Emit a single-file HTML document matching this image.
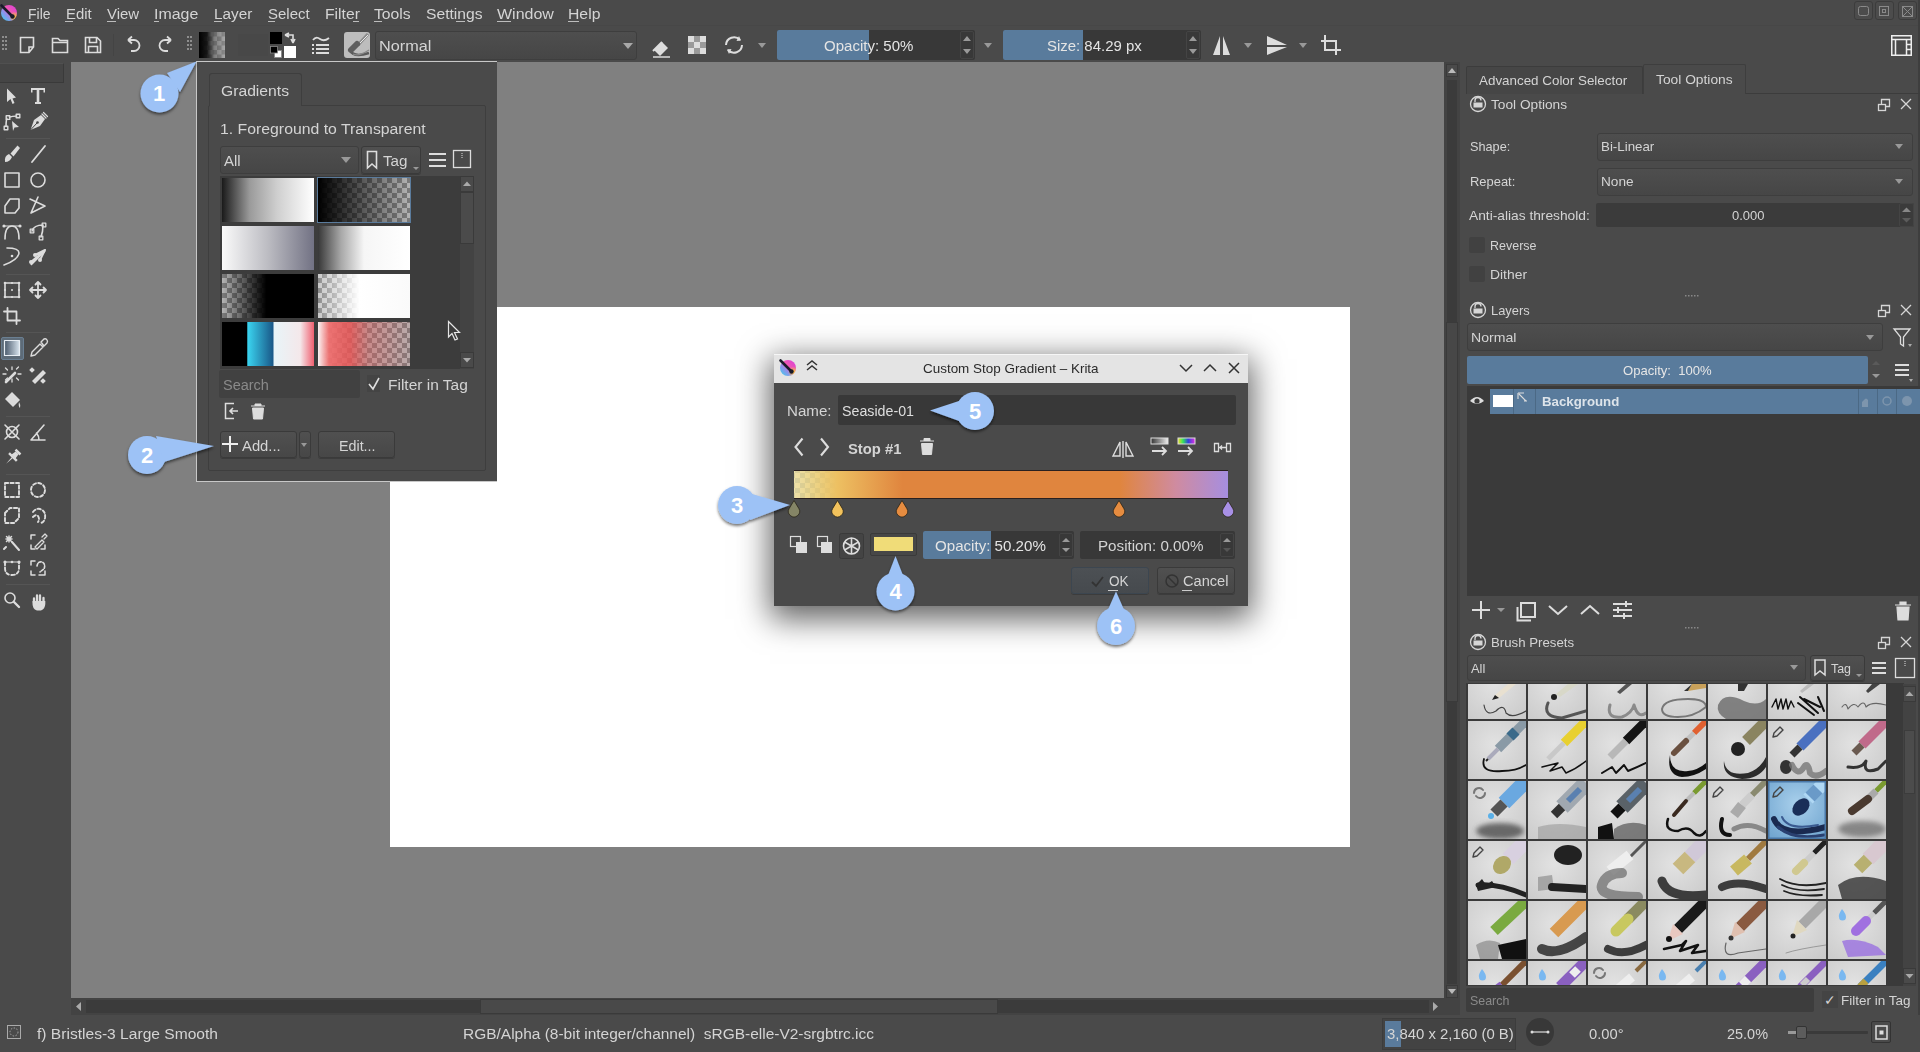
<!DOCTYPE html>
<html><head><meta charset="utf-8">
<style>
*{margin:0;padding:0;box-sizing:border-box}
html,body{width:1920px;height:1052px;overflow:hidden;background:#4a4a4a;font-family:"Liberation Sans",sans-serif;color:#d4d4d4;font-size:13px}
.a{position:absolute}
.t{position:absolute;white-space:nowrap;line-height:1}
svg{position:absolute;overflow:visible}
.m{font-size:14px;top:7px}
.btn{position:absolute;border:1px solid #3a3a3a;border-radius:3px;background:linear-gradient(#505050,#474747);box-shadow:0 1px 0 #3c3c3c}
.fld{position:absolute;background:#3a3a3a;border-radius:2px}
.combo{position:absolute;border:1px solid #3e3e3e;border-radius:3px;background:linear-gradient(#4e4e4e,#464646)}
.arr{position:absolute;width:0;height:0;border-left:5px solid transparent;border-right:5px solid transparent;border-top:6px solid #a8a8a8}
.ic{stroke:#dcdcdc;fill:none;stroke-width:1.6}
</style></head><body>

<!-- ============ MENU ============ -->
<svg style="left:0px;top:4px" width="18" height="18" viewBox="0 0 18 18"><defs><linearGradient id="kaa" x1="1" y1="0" x2="0" y2="1"><stop offset="0" stop-color="#d83ae0"/><stop offset=".45" stop-color="#f05ab0"/><stop offset=".6" stop-color="#9a8ae8"/><stop offset="1" stop-color="#30d8f0"/></linearGradient>
<radialGradient id="kab" cx=".85" cy=".75" r=".35"><stop offset="0" stop-color="#f8d030"/><stop offset="1" stop-color="#f8d030" stop-opacity="0"/></radialGradient></defs>
<circle cx="9" cy="9" r="8" fill="url(#kaa)"/><circle cx="9" cy="9" r="8" fill="url(#kab)"/>
<path d="M1.5 1.5 L11.5 11.5" stroke="#1a1a2a" stroke-width="2.6" stroke-linecap="round"/><circle cx="12.5" cy="12.5" r="2.2" fill="#1a1a2a"/></svg>
<div class="t m" style="left:27.5px;top:6.9px;transform:scaleX(0.997);transform-origin:0 0">File</div>
<div class="t m" style="left:66.2px;top:6.9px;transform:scaleX(1.063);transform-origin:0 0">Edit</div>
<div class="t m" style="left:107.2px;top:6.9px;transform:scaleX(1.068);transform-origin:0 0">View</div>
<div class="t m" style="left:154.4px;top:6.9px;transform:scaleX(1.139);transform-origin:0 0">Image</div>
<div class="t m" style="left:214.0px;top:6.9px;transform:scaleX(1.093);transform-origin:0 0">Layer</div>
<div class="t m" style="left:267.7px;top:6.9px;transform:scaleX(1.069);transform-origin:0 0">Select</div>
<div class="t m" style="left:324.5px;top:6.9px;transform:scaleX(1.121);transform-origin:0 0">Filter</div>
<div class="t m" style="left:374.0px;top:6.9px;transform:scaleX(1.123);transform-origin:0 0">Tools</div>
<div class="t m" style="left:425.5px;top:6.9px;transform:scaleX(1.117);transform-origin:0 0">Settings</div>
<div class="t m" style="left:497.0px;top:6.9px;transform:scaleX(1.143);transform-origin:0 0">Window</div>
<div class="t m" style="left:568.0px;top:6.9px;transform:scaleX(1.125);transform-origin:0 0">Help</div>
<div class="a" style="left:27.0px;top:21px;width:7.0px;height:1px;background:#bdbdbd"></div><div class="a" style="left:65.0px;top:21px;width:8.0px;height:1px;background:#bdbdbd"></div><div class="a" style="left:107.0px;top:21px;width:8.6px;height:1px;background:#bdbdbd"></div><div class="a" style="left:154.0px;top:21px;width:5.4px;height:1px;background:#bdbdbd"></div><div class="a" style="left:214.0px;top:21px;width:8.0px;height:1px;background:#bdbdbd"></div><div class="a" style="left:267.7px;top:21px;width:6.9px;height:1px;background:#bdbdbd"></div><div class="a" style="left:353.0px;top:21px;width:6.4px;height:1px;background:#bdbdbd"></div><div class="a" style="left:373.7px;top:21px;width:8.5px;height:1px;background:#bdbdbd"></div><div class="a" style="left:455.8px;top:21px;width:9.2px;height:1px;background:#bdbdbd"></div><div class="a" style="left:497.0px;top:21px;width:14.3px;height:1px;background:#bdbdbd"></div><div class="a" style="left:568.3px;top:21px;width:10.3px;height:1px;background:#bdbdbd"></div>
<!-- window buttons -->
<div class="a" style="left:1854px;top:1px;width:19px;height:19px;border:1px solid #3c3c3c;border-radius:3px;background:#4c4c4c"></div>
<div class="a" style="left:1875px;top:1px;width:19px;height:19px;border:1px solid #3c3c3c;border-radius:3px;background:#4c4c4c"></div>
<div class="a" style="left:1898px;top:1px;width:19px;height:19px;border:1px solid #3c3c3c;border-radius:3px;background:#4c4c4c"></div>
<svg style="left:1854px;top:1px" width="64" height="19">
<g stroke="#8a8a8a" fill="none" stroke-width="1"><rect x="4.5" y="5.5" width="10" height="9" rx="2"/><rect x="25.5" y="5.5" width="9" height="9"/><rect x="28.5" y="8.5" width="3" height="3"/><rect x="48.5" y="5.5" width="10" height="10"/><path d="M48.5 5.5 L58.5 15.5 M58.5 5.5 L48.5 15.5"/></g>
</svg>
<div class="a" style="left:0;top:25px;width:1920px;height:1px;background:#474747"></div>

<!-- ============ TOOLBAR ============ -->
<svg style="left:0;top:28px" width="1920" height="34">
<g fill="#8e8e8e"><rect x="2" y="8" width="2" height="2"/><rect x="5" y="8" width="2" height="2"/><rect x="2" y="12" width="2" height="2"/><rect x="5" y="12" width="2" height="2"/><rect x="2" y="16" width="2" height="2"/><rect x="5" y="16" width="2" height="2"/><rect x="2" y="20" width="2" height="2"/><rect x="5" y="20" width="2" height="2"/></g>
<g fill="#8e8e8e"><rect x="187" y="8" width="2" height="2"/><rect x="190" y="8" width="2" height="2"/><rect x="187" y="12" width="2" height="2"/><rect x="190" y="12" width="2" height="2"/><rect x="187" y="16" width="2" height="2"/><rect x="190" y="16" width="2" height="2"/><rect x="187" y="20" width="2" height="2"/><rect x="190" y="20" width="2" height="2"/></g>
<g class="ic" stroke-width="1.5">
<path d="M20.5 9.5 H33.5 V19 L29 24.5 H20.5 Z M33.5 19 H29 V24.5"/>
<path d="M52.5 10.5 H58 L60 12.5 H67.5 V24.5 H52.5 Z M52.5 14.5 H67.5"/>
<path d="M85.5 9.5 H97 L100.5 13 V24.5 H85.5 Z M89.5 9.5 V14.5 H96.5 V9.5 M88.5 24.5 V18.5 H97.5 V24.5"/>
<path d="M128 12 L132 8.5 M128 12 L132 15.5 M128.5 12 H134 A5.5 5.5 0 0 1 134 23 H131" stroke-width="1.8"/>
<path d="M171 12 L167 8.5 M171 12 L167 15.5 M170.5 12 H165 A5.5 5.5 0 0 0 165 23 H168" stroke-width="1.8"/>
</g>
<rect x="113" y="6" width="1" height="22" fill="#444"/>
<defs><linearGradient id="g0" x1="0" x2="1"><stop offset="0" stop-color="#000"/><stop offset=".3" stop-color="#000" stop-opacity=".85"/><stop offset=".6" stop-color="#000" stop-opacity=".25"/><stop offset="1" stop-color="#000" stop-opacity="0"/></linearGradient>
<pattern id="chk" x="199" y="4" width="9" height="9" patternUnits="userSpaceOnUse"><rect width="9" height="9" fill="#8a8a8a"/><rect width="4.5" height="4.5" fill="#a8a8a8"/><rect x="4.5" y="4.5" width="4.5" height="4.5" fill="#a8a8a8"/></pattern></defs>
<rect x="199" y="4" width="26" height="26" fill="url(#chk)"/>
<rect x="199" y="4" width="26" height="26" fill="url(#g0)"/>
<rect x="238" y="6" width="30" height="22" fill="#484848"/>
<rect x="270" y="4" width="12" height="12" fill="#000"/>
<rect x="284" y="18" width="12" height="12" fill="#fff"/>
<rect x="274.5" y="22.5" width="7" height="7" fill="#fff" stroke="#888" stroke-width=".8"/><rect x="270.5" y="18.5" width="7" height="6.5" fill="#000" stroke="#888" stroke-width=".8"/>
<path d="M285 7 L289 5 M285 7 L289 9 M285 7 H293 V14 M293 15 L291 11 M293 15 L295 11" stroke="#ddd" stroke-width="1.6" fill="none"/>
<g stroke="#ddd" stroke-width="1.8" fill="none"><path d="M313 12 Q316 8 320 11 T329 10"/><path d="M316 17 H329 M316 21 H329 M316 25 H329"/></g>
<g fill="#ddd"><rect x="312" y="16" width="2" height="2"/><rect x="312" y="20" width="2" height="2"/><rect x="312" y="24" width="2" height="2"/></g>
<rect x="344" y="4" width="26" height="26" rx="3" fill="#bdbdbd"/>
<path d="M350 22 Q353 30 369 25" stroke="#5a5a5a" stroke-width="2.6" fill="none"/><path d="M353 26 Q358 29 369 22" stroke="#888" stroke-width="1.2" fill="none"/>
<path d="M358 17 L368 6" stroke="#8a8a8a" stroke-width="3.2"/><path d="M359 16 L368 7" stroke="#e8e8e8" stroke-width="1"/><path d="M351 22 L357 16" stroke="#5e5e5e" stroke-width="6" stroke-linecap="round"/>
</svg>
<!-- Normal combo -->
<div class="combo" style="left:375px;top:31px;width:262px;height:29px"></div>
<div class="t" style="left:379.3px;top:39.1px;font-size:14px;transform:scaleX(1.161);transform-origin:0 0">Normal</div>
<div class="arr" style="left:623px;top:43px"></div>
<svg style="left:640px;top:28px" width="740" height="34">
<path d="M14 22 L22 14 L28 20 L20 28 Z" fill="#ddd"/><path d="M13 23 L22 14" stroke="#ddd" stroke-width="2"/><path d="M13 29 H30" stroke="#ddd" stroke-width="1.5"/>
<g fill="#ddd"><rect x="48" y="8" width="6" height="6"/><rect x="60" y="8" width="6" height="6"/><rect x="54" y="14" width="6" height="6"/><rect x="48" y="20" width="6" height="6"/><rect x="60" y="20" width="6" height="6"/></g>
<g fill="#9a9a9a"><rect x="54" y="8" width="6" height="6"/><rect x="48" y="14" width="6" height="6"/><rect x="60" y="14" width="6" height="6"/><rect x="54" y="20" width="6" height="6"/></g>
<path d="M86 17 A8 8 0 0 1 100 12 M102 17 A8 8 0 0 1 88 22" stroke="#ddd" stroke-width="2" fill="none"/>
<path d="M99 8 L101 12.5 L96.5 13 Z M89 26 L87 21.5 L91.5 21 Z" fill="#ddd"/>
</svg>
<div class="arr" style="left:758px;top:43px;border-top-color:#999;border-left-width:4px;border-right-width:4px;border-top-width:5px"></div>
<!-- opacity slider -->
<div class="a" style="left:777px;top:30px;width:198px;height:30px;background:#383838;border-radius:2px"></div>
<div class="a" style="left:777px;top:30px;width:92px;height:30px;background:#597b9c;border-radius:2px 0 0 2px"></div>
<div class="t" style="left:823.8px;top:39.1px;font-size:14px;color:#e4e4e4;transform:scaleX(1.073);transform-origin:0 0">Opacity: 50%</div>
<div class="a" style="left:960px;top:31px;width:14px;height:28px;border:1px solid #444;border-radius:2px"></div>
<svg style="left:960px;top:31px" width="14" height="28"><path d="M3 10 L7 5 L11 10 Z M3 18 L7 23 L11 18 Z" fill="#999"/></svg>
<div class="arr" style="left:984px;top:43px;border-top-color:#999;border-left-width:4px;border-right-width:4px;border-top-width:5px"></div>
<!-- size slider -->
<div class="a" style="left:1003px;top:30px;width:198px;height:30px;background:#383838;border-radius:2px"></div>
<div class="a" style="left:1003px;top:30px;width:80px;height:30px;background:#597b9c;border-radius:2px 0 0 2px"></div>
<div class="t" style="left:1047.0px;top:39.1px;font-size:14px;color:#e4e4e4;transform:scaleX(1.067);transform-origin:0 0">Size: 84.29 px</div>
<div class="a" style="left:1186px;top:31px;width:14px;height:28px;border:1px solid #444;border-radius:2px"></div>
<svg style="left:1186px;top:31px" width="14" height="28"><path d="M3 10 L7 5 L11 10 Z M3 18 L7 23 L11 18 Z" fill="#999"/></svg>
<svg style="left:1200px;top:28px" width="160" height="34">
<path d="M13 27 L20 8 V27 Z M23 8 L30 27 H23 Z" fill="#ddd"/>
<path d="M44 15 L52 15 L48 20 Z" fill="#999"/>
<path d="M67 8 L87 17 L67 17 Z M67 19 L87 19 L67 27 Z" fill="#ddd"/>
<path d="M99 15 L107 15 L103 20 Z" fill="#999"/>
<path d="M125 7 V22 H141 M121 13 H136 V27" stroke="#ddd" stroke-width="2" fill="none"/>
</svg>
<svg style="left:1891px;top:35px" width="21" height="21"><g stroke="#eee" stroke-width="1.5" fill="none"><rect x="0.75" y="0.75" width="19.5" height="19.5"/><path d="M1 4.5 H20 M4.5 4.5 V20 M15.5 4.5 V20 M15.5 9.5 H20 M15.5 14.5 H20"/></g></svg>

<!-- ============ CANVAS ============ -->
<div class="a" style="left:71px;top:62px;width:1373px;height:936px;background:#808080"></div>
<div class="a" style="left:390px;top:307px;width:960px;height:540px;background:#fff"></div>
<!-- v scrollbar -->
<div class="a" style="left:1444px;top:62px;width:16px;height:953px;background:#434343"></div>
<div class="a" style="left:1446px;top:64px;width:12px;height:13px;border:1px solid #3a3a3a;background:#4a4a4a"></div>
<svg style="left:1446px;top:64px" width="12" height="13"><path d="M2 9 L6 4 L10 9 Z" fill="#bbb"/></svg>
<div class="a" style="left:1447px;top:80px;width:10px;height:904px;background:#3b3b3b"></div>
<div class="a" style="left:1446px;top:322px;width:12px;height:380px;background:#474747;border:1px solid #3a3a3a"></div>
<div class="a" style="left:1446px;top:985px;width:12px;height:13px;border:1px solid #3a3a3a;background:#4a4a4a"></div>
<svg style="left:1446px;top:985px" width="12" height="13"><path d="M2 4 L6 9 L10 4 Z" fill="#bbb"/></svg>
<!-- h scrollbar -->
<div class="a" style="left:71px;top:998px;width:1373px;height:17px;background:#434343"></div>
<div class="a" style="left:86px;top:1000px;width:1343px;height:13px;background:#3b3b3b"></div>
<div class="a" style="left:480px;top:999px;width:518px;height:15px;background:#494949;border:1px solid #3a3a3a"></div>
<svg style="left:72px;top:999px" width="1372" height="15"><path d="M9 3 L4 7.5 L9 12 Z M1361 3 L1366 7.5 L1361 12 Z" fill="#aaa"/></svg>


<!-- ============ LEFT TOOLBOX ============ -->
<div class="a" style="left:0;top:63px;width:64px;height:20px;background:#454545;border:1px solid #3a3a3a;border-left:0;border-top-color:#505050"></div>
<div class="a" style="left:66px;top:62px;width:5px;height:936px;background:#4a4a4a"></div>
<div class="a" style="left:1px;top:337px;width:23px;height:23px;background:#5d6b78;border:1px solid #6a7f92;border-radius:2px"></div>
<svg style="left:0;top:0" width="66" height="640">
<defs><linearGradient id="gt" x1="0" y1="0" x2="1" y2="0"><stop offset="0" stop-color="#4a5a6c"/><stop offset="1" stop-color="#d8e4ee"/></linearGradient></defs>
<g stroke="#555" stroke-width="1"><path d="M6 138.5 H50 M6 274.5 H50 M6 332.5 H50 M6 416.5 H50 M6 474.5 H50 M6 584.5 H50"/></g>
<g fill="#dcdcdc">
<path d="M7 88.5 L7 102 L10.5 99 L12.5 104 L14.5 103 L12.5 98.5 L16 97.5 Z"/>
<path d="M31 88 H45 V92.5 H43.5 V90 H39.3 V102 H41 V104 H35 V102 H36.7 V90 H32.5 V92.5 H31 Z"/>
<path d="M12 121 L19 127 L14.5 127.5 L13 131 Z"/>
<path d="M30.5 130 L34 120 L41 115 L45 119 L40 126 Z"/>
<path d="M5 162 Q4 156 9 154 L12 157 Q10 162 5 162 Z"/><path d="M10.5 153.5 L13.5 156.5 L20 148 L17.5 145.5 Z"/>
<path d="M31 213.5 L31 213.5"/>
<path d="M30 264 L44 250 L45.5 251.5 L31.5 265.5 Z" />
<path d="M6 606 L6 606"/>
<path d="M5 318 L5 318"/>
<path d="M32 381 L43 370 L46 373 L35 384 Z"/><rect x="30" y="368" width="4" height="4" transform="rotate(45 32 370)"/><rect x="41" y="379" width="4" height="4" transform="rotate(45 43 381)"/>
<path d="M5 399 L12 392 L20 400 L13 407 Z"/><path d="M19 402 Q21 405 20 408 Q18 406 19 402 Z"/>
<g transform="translate(12.5 457.5) rotate(45)"><rect x="-3.5" y="-9" width="7" height="2.5"/><path d="M-2 -6.5 H2 L2.8 -1.5 H-2.8 Z"/><rect x="-5.5" y="-1.8" width="11" height="2.4"/><path d="M-0.7 0.5 H0.7 L0 9 Z"/></g>
<path d="M32.5 602 Q32 609 37 610.5 H41 Q45 609 45.3 604 V601 H32.5 Z"/>
</g>
<g fill="none" stroke="#dcdcdc" stroke-width="1.6" stroke-linejoin="round" stroke-linecap="round">
<path d="M6 127 Q6 118 8 117.5 Q12 116 18 116"/>
<rect x="4.2" y="126.2" width="3.6" height="3.6" stroke-width="1.4"/><rect x="6.2" y="115.8" width="3.6" height="3.6" stroke-width="1.4"/><rect x="16.2" y="114.2" width="3.6" height="3.6" stroke-width="1.4"/>
<path d="M42 114 L46 118 M43.5 112.5 L47.5 116.5" stroke-width="1.2"/>
<path d="M32 162 L45 146" stroke-width="1.8"/>
<rect x="5" y="173" width="14" height="14"/><circle cx="38" cy="180" r="7"/>
<path d="M5 206 L10 199 H19 V208 L15 213 H5 Z"/>
<path d="M31 213 L45 206 L30 199 M31 213 L38 197"/>
<path d="M5 239 Q5 226 12 226 Q19 226 19 239"/><path d="M4 226 H20" stroke-width="1.2"/>
<path d="M32 231 Q34 225 43 225 Q43 232 41 237"/>
<rect x="30.2" y="229.2" width="3.6" height="3.6" stroke-width="1.3"/><rect x="42.2" y="223.2" width="3.6" height="3.6" stroke-width="1.3"/><rect x="39.2" y="236.2" width="3.6" height="3.6" stroke-width="1.3"/>
<path d="M4 265 Q18 260 19 253 Q19 248 7 248"/>
<path d="M45 250 L35 255 M45 250 L40 260 M45 250 L31 262" stroke-width="2"/>
<rect x="5" y="283" width="14" height="14"/>
<path d="M38 282 V298 M30 290 H46 M35.5 284.5 L38 282 L40.5 284.5 M35.5 295.5 L38 298 L40.5 295.5 M32.5 287.5 L30 290 L32.5 292.5 M43.5 287.5 L46 290 L43.5 292.5" stroke-width="1.8"/>
<path d="M7.5 308 V320.5 H20 M4 311.5 H16.5 V324" stroke-width="1.8"/>
<rect x="4.5" y="340.5" width="15" height="15" fill="url(#gt)" stroke="#e8eef4" stroke-width="1.2"/>
<path d="M31 356 L32 352 L40 344 L43 347 L35 355 Z M41 342 L44 339 Q46 338 47 340 Q48 341 47 343 L44 346 Z" stroke-width="1.4"/>
<path d="M6 382 L15 373" stroke-width="2.6"/><path d="M3 374 H6 M18 374 H21 M12 367 V369.5 M12 379 V382 M5.5 368 L7.5 370 M16.5 378 L18.5 380 M5.5 380 L7.5 378 M18.5 367 L16.5 369" stroke-width="1.3"/>
<path d="M5 425 L19 439 M19 425 L5 439"/><circle cx="12" cy="432" r="5.5"/>
<path d="M31 440 L44 425 M31 440 H45 M36.5 433 Q39 436 39 440"/>
<rect x="5" y="483" width="14" height="14" stroke-dasharray="3.2 2.3" stroke-width="1.9"/><circle cx="38" cy="490" r="7" stroke-dasharray="3.2 2.3" stroke-width="1.9"/>
<path d="M5 513 L10 508 H19 V518 L14 523 H5 Z" stroke-dasharray="3.2 2.3" stroke-width="1.9"/>
<path d="M33 512 Q36 508 40 509 Q46 511 45 518 Q44 523 40 523 M33 517 Q36 514 38 516 Q40 519 38 522" stroke-dasharray="3.2 2.3" stroke-width="1.9"/>
<path d="M6 547 L4 549" stroke-width="2"/><path d="M9 536 V542 M6 539 H12 M6.5 536.5 L11.5 541.5 M11.5 536.5 L6.5 541.5" stroke-width="1.5"/><path d="M12 542 L19 550" stroke-width="2"/>
<path d="M31 535 H35 M31 535 V539 M31 545 V549 H35 M41 549 H45 V545" stroke-width="1.5"/><path d="M35 547 L42 540 L44 542 L37 549 Z M42 537 L45 534 L47 536 L44 539" stroke-width="1.3"/>
<path d="M5 562 V568 Q5 575 12 575 Q19 575 19 568 V562" stroke-dasharray="3.2 2.3" stroke-width="1.9"/><path d="M5 562 H19" stroke-width="1.2"/>
<path d="M31 561 H35 M31 561 V565 M31 571 V575 H35 M39 575 H45 V571" stroke-width="1.5"/><path d="M37 566 Q38 561 42 562 Q46 564 44 569 L40 572" stroke-dasharray="2.5 1.5"/>
<circle cx="10" cy="598" r="5"/><path d="M14 602 L19 607" stroke-width="2.4"/><path d="M34 603 V598.5 M37 602 V595.5 M40 602 V595.5 M43.5 603 V598" stroke-width="2.3"/>
</g>
<g fill="#dcdcdc"><circle cx="5" cy="562" r="1.6"/><circle cx="19" cy="562" r="1.6"/><circle cx="12" cy="562" r="1.3"/><circle cx="12" cy="290" r="1"/>
<circle cx="5" cy="283" r="1.3"/><circle cx="19" cy="283" r="1.3"/><circle cx="5" cy="297" r="1.3"/><circle cx="19" cy="297" r="1.3"/><circle cx="12" cy="283" r="1.1"/><circle cx="12" cy="297" r="1.1"/><circle cx="5" cy="290" r="1.1"/><circle cx="19" cy="290" r="1.1"/>
<circle cx="12" cy="256" r="1.3"/><circle cx="35" cy="255" r="2"/><circle cx="40" cy="260" r="2"/><circle cx="31" cy="262" r="2"/>
<circle cx="4" cy="226" r="1.6"/><circle cx="20" cy="226" r="1.6"/>
</g>
<g fill="#444"><rect x="5.2" y="127.2" width="1.6" height="1.6"/><rect x="7.2" y="116.8" width="1.6" height="1.6"/><rect x="17.2" y="115.2" width="1.6" height="1.6"/><circle cx="37.5" cy="122.5" r="1.3"/><path d="M30.5 130 L37 123" stroke="#444" stroke-width="1"/></g>
</svg>


<!-- ============ RIGHT DOCK ============ -->
<div class="a" style="left:1460px;top:62px;width:460px;height:953px;background:#4a4a4a"></div>
<div class="a" style="left:1918px;top:0;width:2px;height:1052px;background:#3e3e3e"></div>
<!-- tabs -->
<div class="a" style="left:1466px;top:93px;width:454px;height:1px;background:#3c3c3c"></div>
<div class="a" style="left:1466px;top:66px;width:177px;height:28px;border:1px solid #3c3c3c;border-bottom:0;border-radius:2px 2px 0 0;background:#464646"></div>
<div class="a" style="left:1643px;top:64px;width:103px;height:30px;border:1px solid #3e3e3e;border-bottom:0;border-radius:2px 2px 0 0;background:#4a4a4a"></div>
<div class="a" style="left:1644px;top:93px;width:101px;height:1px;background:#4a4a4a"></div>
<div class="t" style="left:1479.4px;top:74.0px;transform:scaleX(1.030);transform-origin:0 0">Advanced Color Selector</div>
<div class="t" style="left:1656.0px;top:73.2px;transform:scaleX(1.061);transform-origin:0 0">Tool Options</div>
<!-- dock header icons (lock / float / close) -->
<svg style="left:1460px;top:90px" width="460" height="560">
<g fill="none" stroke="#d6d6d6" stroke-width="1.3">
<circle cx="18" cy="14" r="7.5"/><path d="M15 12 V10.5 A3 3 0 0 1 21 10.5"/><rect x="13.5" y="12.5" width="9" height="5" fill="#d6d6d6" stroke="none"/>
<rect x="418.5" y="14.5" width="7" height="6"/><path d="M421.5 14.5 V9.5 H429.5 V16.5 H425.5"/>
<path d="M441 9 L451 19 M451 9 L441 19"/>
<circle cx="18" cy="220" r="7.5"/><path d="M15 218 V216.5 A3 3 0 0 1 21 216.5"/><rect x="13.5" y="218.5" width="9" height="5" fill="#d6d6d6" stroke="none"/>
<rect x="418.5" y="220.5" width="7" height="6"/><path d="M421.5 220.5 V215.5 H429.5 V222.5 H425.5"/>
<path d="M441 215 L451 225 M451 215 L441 225"/>
<circle cx="18" cy="552" r="7.5"/><path d="M15 550 V548.5 A3 3 0 0 1 21 548.5"/><rect x="13.5" y="550.5" width="9" height="5" fill="#d6d6d6" stroke="none"/>
<rect x="418.5" y="552.5" width="7" height="6"/><path d="M421.5 552.5 V547.5 H429.5 V554.5 H425.5"/>
<path d="M441 547 L451 557 M451 547 L441 557"/>
</g>
</svg>
<div class="t" style="left:1491.4px;top:98.0px;transform:scaleX(1.052);transform-origin:0 0">Tool Options</div>
<div class="t" style="left:1469.5px;top:140.2px;transform:scaleX(0.978);transform-origin:0 0">Shape:</div>
<div class="combo" style="left:1597px;top:133px;width:316px;height:28px"></div>
<div class="t" style="left:1601.0px;top:140.2px;transform:scaleX(1.024);transform-origin:0 0">Bi-Linear</div>
<div class="arr" style="left:1895px;top:144px;border-left-width:4px;border-right-width:4px;border-top-width:5px;border-top-color:#999"></div>
<div class="t" style="left:1469.5px;top:175.0px;transform:scaleX(0.995);transform-origin:0 0">Repeat:</div>
<div class="combo" style="left:1597px;top:168px;width:316px;height:28px"></div>
<div class="t" style="left:1601.0px;top:175.0px;transform:scaleX(1.049);transform-origin:0 0">None</div>
<div class="arr" style="left:1895px;top:179px;border-left-width:4px;border-right-width:4px;border-top-width:5px;border-top-color:#999"></div>
<div class="t" style="left:1469.0px;top:209.2px;transform:scaleX(1.058);transform-origin:0 0">Anti-alias threshold:</div>
<div class="fld" style="left:1596px;top:203px;width:318px;height:24px;background:#3b3b3b"></div>
<div class="a" style="left:1899px;top:203px;width:15px;height:24px;border:1px solid #444;border-radius:2px"></div>
<svg style="left:1899px;top:203px" width="15" height="24"><path d="M3 9 L7.5 4.5 L12 9 Z" fill="#888"/><path d="M3 15 L7.5 19.5 L12 15 Z" fill="#5c5c5c"/></svg>
<div class="t" style="left:1731.5px;top:209.2px;transform:scaleX(0.999);transform-origin:0 0">0.000</div>
<div class="a" style="left:1469px;top:237px;width:16px;height:16px;background:#414141;border-radius:2px"></div>
<div class="t" style="left:1489.5px;top:239.3px;transform:scaleX(0.960);transform-origin:0 0">Reverse</div>
<div class="a" style="left:1469px;top:266px;width:16px;height:16px;background:#414141;border-radius:2px"></div>
<div class="t" style="left:1489.5px;top:268.0px;transform:scaleX(1.067);transform-origin:0 0">Dither</div>
<svg style="left:1685px;top:295px" width="16" height="3"><g fill="#888"><rect x="0" y="0" width="1.5" height="1.5"/><rect x="3" y="0" width="1.5" height="1.5"/><rect x="6" y="0" width="1.5" height="1.5"/><rect x="9" y="0" width="1.5" height="1.5"/><rect x="12" y="0" width="1.5" height="1.5"/></g></svg>
<!-- Layers -->
<div class="t" style="left:1491.3px;top:304.0px;transform:scaleX(0.992);transform-origin:0 0">Layers</div>
<div class="combo" style="left:1467px;top:323px;width:416px;height:28px"></div>
<div class="t" style="left:1471.3px;top:331.0px;transform:scaleX(1.083);transform-origin:0 0">Normal</div>
<div class="arr" style="left:1866px;top:335px;border-left-width:4px;border-right-width:4px;border-top-width:5px;border-top-color:#999"></div>
<svg style="left:1892px;top:327px" width="22" height="22"><path d="M2 2 H18 L11.5 10 V19 L8.5 17 V10 Z" fill="none" stroke="#ddd" stroke-width="1.3"/><path d="M16 17 L20 17 L18 20 Z" fill="#aaa"/></svg>
<div class="a" style="left:1467px;top:356px;width:401px;height:28px;background:#597b9c;border-radius:2px"></div>
<div class="t" style="left:1623.3px;top:364.0px;color:#e6e6e6;transform:scaleX(1.006);transform-origin:0 0">Opacity:&nbsp; 100%</div>
<svg style="left:1869px;top:356px" width="14" height="28"><path d="M3 9 L7 5 L11 9 Z" fill="#5a5a5a"/><path d="M3 18 L7 22 L11 18 Z" fill="#999"/></svg>
<svg style="left:1893px;top:362px" width="22" height="22"><path d="M2 3 H16 M2 8 H16 M2 13 H16" stroke="#ddd" stroke-width="2"/><path d="M16 17 L20 17 L18 20 Z" fill="#aaa"/></svg>
<div class="a" style="left:1467px;top:386px;width:453px;height:210px;background:#3a3a3a"></div>
<div class="a" style="left:1490px;top:389px;width:430px;height:25px;background:#597b9c"></div>
<div class="a" style="left:1513px;top:389px;width:1px;height:25px;background:#4b6985"></div>
<div class="a" style="left:1535px;top:389px;width:1px;height:25px;background:#4b6985"></div>
<div class="a" style="left:1858px;top:389px;width:1px;height:25px;background:#4b6985"></div>
<div class="a" style="left:1877px;top:389px;width:1px;height:25px;background:#4b6985"></div>
<div class="a" style="left:1896px;top:389px;width:1px;height:25px;background:#4b6985"></div>
<svg style="left:1468px;top:390px" width="452" height="24">
<path d="M2 11 Q9 3 16 11 Q9 17 2 11 Z" fill="#ddd"/><circle cx="9" cy="11" r="2.6" fill="#3a3a3a"/>
<rect x="25" y="5" width="20" height="12" fill="#fff"/>
<path d="M50 3 H56 M50 3 V9 M51 4 L58 11 M56 11 H59" stroke="#ddd" stroke-width="1.1" fill="none"/>
<g fill="#7d95ad"><path d="M396 10 Q398 7 400 10 V17 H394 V12 Z"/><circle cx="419" cy="11" r="4" fill="none" stroke="#7d95ad" stroke-width="1.5"/><circle cx="439" cy="11" r="5"/></g>
</svg>
<div class="t" style="left:1541.7px;top:394.8px;font-weight:bold;color:#dde4ea;transform:scaleX(1.019);transform-origin:0 0">Background</div>
<svg style="left:1460px;top:596px" width="460" height="30">
<g stroke="#ddd" stroke-width="2" fill="none"><path d="M21 5 V23 M12 14 H30"/><rect x="61" y="7" width="14" height="14"/><path d="M57.5 11 V24.5 H71"/><path d="M89 10 L98 18 L107 10 M121 18 L130 10 L139 18"/><path d="M153 8 H172 M153 14 H172 M153 20 H172"/></g>
<g fill="#ddd"><rect x="165" y="5" width="2" height="6"/><rect x="157" y="11" width="2" height="6"/><rect x="163" y="17" width="2" height="6"/></g>
<path d="M37 12 L45 12 L41 16 Z" fill="#999"/>
<path d="M435 9 H451 M440 9 V6 H446 V9 M437 11 H449 L448 24 H438 Z" fill="#ddd" stroke="#ddd" stroke-width="1.2"/>
</svg>
<svg style="left:1685px;top:627px" width="16" height="3"><g fill="#888"><rect x="0" y="0" width="1.5" height="1.5"/><rect x="3" y="0" width="1.5" height="1.5"/><rect x="6" y="0" width="1.5" height="1.5"/><rect x="9" y="0" width="1.5" height="1.5"/><rect x="12" y="0" width="1.5" height="1.5"/></g></svg>
<!-- Brush presets -->
<div class="t" style="left:1491.2px;top:635.9px;transform:scaleX(1.018);transform-origin:0 0">Brush Presets</div>
<div class="combo" style="left:1467px;top:655px;width:339px;height:26px"></div>
<div class="t" style="left:1471.2px;top:661.5px;transform:scaleX(0.993);transform-origin:0 0">All</div>
<div class="arr" style="left:1790px;top:665px;border-left-width:4px;border-right-width:4px;border-top-width:5px;border-top-color:#999"></div>
<div class="btn" style="left:1810px;top:655px;width:55px;height:26px"></div>
<svg style="left:1810px;top:655px" width="110" height="26"><path d="M5 5 H15 V20 L10 16 L5 20 Z" fill="none" stroke="#ddd" stroke-width="1.5"/><path d="M46 19 L52 19 L49 22 Z" fill="#999"/>
<path d="M62 8 H76 M62 13 H76 M62 18 H76" stroke="#ddd" stroke-width="2"/>
<rect x="85.5" y="3.5" width="19" height="19" fill="none" stroke="#ddd" stroke-width="1.3"/><path d="M95 6 V11" stroke="#ddd" stroke-width="1" stroke-dasharray="1 1"/></svg>
<div class="t" style="left:1831.2px;top:661.5px;transform:scaleX(0.954);transform-origin:0 0">Tag</div>
<div class="a" style="left:1466px;top:683px;width:438px;height:303px;background:#3a3a3a"></div>
<div id="brushes" class="a" style="left:1468px;top:684px;width:418px;height:301px;overflow:hidden"><svg style="left:0;top:0" width="418" height="301"><defs><radialGradient id="tb" cx=".45" cy=".4" r=".75"><stop offset="0" stop-color="#e2e2e2"/><stop offset="1" stop-color="#cbcbcb"/></radialGradient><radialGradient id="tbs" cx=".5" cy=".4" r=".8"><stop offset="0" stop-color="#a9d0ec"/><stop offset="1" stop-color="#6aa0cc"/></radialGradient><filter id="bl" x="-30%" y="-50%" width="160%" height="200%"><feGaussianBlur stdDeviation="2.5"/></filter><clipPath id="tc"><rect x="0" y="0" width="58" height="58"/></clipPath></defs><g transform="translate(0,-23)"><g clip-path="url(#tc)"><rect width="58" height="58" fill="url(#tb)"/><path d="M40 23 L48 23 L31 37 L27 34 Z" fill="#e8e0d0" opacity="1"/><path d="M27 34 L31 37 L24 39 Z" fill="#222" opacity="1"/><path d="M16 44 Q18 56 28 50 Q36 42 38 52 Q44 58 58 50" stroke="#444" stroke-width="1.2" fill="none" stroke-linecap="round" stroke-linejoin="round" opacity="1"/></g></g><g transform="translate(60,-23)"><g clip-path="url(#tc)"><rect width="58" height="58" fill="url(#tb)"/><path d="M40 23 L50 23 L32 36 L28 33 Z" fill="#d8d8c8" opacity="1"/><ellipse cx="26" cy="36" rx="3" ry="3" fill="#222" opacity="1"/><path d="M20 42 Q14 56 34 57 L58 50" stroke="#555" stroke-width="3" fill="none" stroke-linecap="round" stroke-linejoin="round" opacity="1"/></g></g><g transform="translate(120,-23)"><g clip-path="url(#tc)"><rect width="58" height="58" fill="url(#tb)"/><path d="M38 23 L44 23 L32 33 L29 31 Z" fill="#555" opacity="1"/><path d="M22 44 Q18 58 34 56 Q44 52 46 44 Q50 58 58 52" stroke="#8a8a8a" stroke-width="3" fill="none" stroke-linecap="round" stroke-linejoin="round" opacity="1"/></g></g><g transform="translate(180,-23)"><g clip-path="url(#tc)"><rect width="58" height="58" fill="url(#tb)"/><path d="M44 23 L58 23 L58 27 L40 30 Z" fill="#c9a15a" opacity="1"/><path d="M40 30 L44 23 L36 30 Z" fill="#333" opacity="1"/><ellipse cx="36" cy="46" rx="22" ry="8" fill="none" opacity="1"/><path d="M14 48 Q16 38 40 38 Q58 38 58 46 Q46 56 30 56 Q14 56 14 48" stroke="#777" stroke-width="2" fill="none" stroke-linecap="round" stroke-linejoin="round" opacity="1"/></g></g><g transform="translate(240,-23)"><g clip-path="url(#tc)"><rect width="58" height="58" fill="url(#tb)"/><path d="M30 23 L40 23 L36 30 L30 30 Z" fill="#333" opacity="1"/><path d="M10 44 Q16 30 36 40 Q50 46 58 38 L58 58 L18 58 Q8 52 10 44 Z" fill="#6a6a6a" opacity="0.8"/></g></g><g transform="translate(300,-23)"><g clip-path="url(#tc)"><rect width="58" height="58" fill="url(#tb)"/><path d="M40 23 L46 23 L34 32 L32 30 Z" fill="#bbb" opacity="1"/><path d="M4 46 L8 38 L10 48 L13 38 L15 48 L18 38 L20 48 L23 40 L26 46" stroke="#111" stroke-width="1.4" fill="none" stroke-linecap="round" stroke-linejoin="round" opacity="1"/><path d="M32 36 L50 52 M30 42 L46 54 M36 38 L52 46 M50 36 L56 50" stroke="#111" stroke-width="2" fill="none" stroke-linecap="round" stroke-linejoin="round" opacity="1"/></g></g><g transform="translate(360,-23)"><g clip-path="url(#tc)"><rect width="58" height="58" fill="url(#tb)"/><path d="M44 23 L52 23 L40 32 L38 30 Z" fill="#444" opacity="1"/><path d="M14 46 Q18 40 20 48 Q26 40 30 46 Q36 38 38 46 Q44 40 58 44" stroke="#666" stroke-width="1.1" fill="none" stroke-linecap="round" stroke-linejoin="round" opacity="1"/></g></g><g transform="translate(0,37)"><g clip-path="url(#tc)"><rect width="58" height="58" fill="url(#tb)"/><path d="M58 0 L30 28" stroke="#8a9aa6" stroke-width="9" stroke-linecap="butt" opacity="1"/><path d="M48 10 L42 16" stroke="#3a6a8a" stroke-width="10" stroke-linecap="butt" opacity="1"/><path d="M30 28 L20 38" stroke="#aab" stroke-width="4" stroke-linecap="butt" opacity="1"/><path d="M20 38 L18 40" stroke="#222" stroke-width="2" stroke-linecap="butt" opacity="1"/><path d="M16 38 Q12 52 34 50 Q48 50 58 44" stroke="#111" stroke-width="1.8" fill="none" stroke-linecap="round" stroke-linejoin="round" opacity="1"/></g></g><g transform="translate(60,37)"><g clip-path="url(#tc)"><rect width="58" height="58" fill="url(#tb)"/><path d="M58 0 L36 22" stroke="#e8d030" stroke-width="9" stroke-linecap="butt" opacity="1"/><path d="M36 22 L20 38" stroke="#c8c8c8" stroke-width="5" stroke-linecap="butt" opacity="1"/><path d="M14 46 L30 42 L22 50 L34 46 L38 52 Q48 48 58 40" stroke="#111" stroke-width="1.5" fill="none" stroke-linecap="round" stroke-linejoin="round" opacity="1"/></g></g><g transform="translate(120,37)"><g clip-path="url(#tc)"><rect width="58" height="58" fill="url(#tb)"/><path d="M58 0 L38 20" stroke="#151515" stroke-width="9" stroke-linecap="butt" opacity="1"/><path d="M38 20 L22 36" stroke="#b8b8b8" stroke-width="7" stroke-linecap="butt" opacity="1"/><path d="M14 52 L24 46 L28 52 L36 44 L40 50 Q50 46 58 42" stroke="#111" stroke-width="2" fill="none" stroke-linecap="round" stroke-linejoin="round" opacity="1"/></g></g><g transform="translate(180,37)"><g clip-path="url(#tc)"><rect width="58" height="58" fill="url(#tb)"/><path d="M58 0 L46 12" stroke="#e06030" stroke-width="6" stroke-linecap="butt" opacity="1"/><path d="M46 12 L38 20" stroke="#c0c0c0" stroke-width="5" stroke-linecap="butt" opacity="1"/><path d="M38 20 L26 32" stroke="#6a5040" stroke-width="6" stroke-linecap="round" opacity="1"/><path d="M22 34 Q22 52 40 50 Q50 49 58 42 L58 48 Q46 56 34 56 Q18 54 22 34 Z" fill="#111" opacity="1"/></g></g><g transform="translate(240,37)"><g clip-path="url(#tc)"><rect width="58" height="58" fill="url(#tb)"/><path d="M58 0 L38 20" stroke="#8a8460" stroke-width="11" stroke-linecap="butt" opacity="1"/><ellipse cx="30" cy="28" rx="7" ry="7" fill="#222" opacity="1"/><path d="M16 40 Q18 56 40 52 Q52 48 58 36 L58 46 Q50 58 34 58 Q14 56 16 40 Z" fill="#1a1a1a" opacity="0.9"/></g></g><g transform="translate(300,37)"><g clip-path="url(#tc)"><rect width="58" height="58" fill="url(#tb)"/><path d="M6 12 L12 6 L15 9 L9 15 L5 16 Z" stroke="#444" stroke-width="1.4" fill="none" stroke-linecap="round" stroke-linejoin="round" opacity="1"/><path d="M58 0 L32 26" stroke="#4a70c0" stroke-width="10" stroke-linecap="butt" opacity="1"/><path d="M32 26 L24 34" stroke="#333" stroke-width="7" stroke-linecap="butt" opacity="1"/><ellipse cx="18" cy="46" rx="6" ry="7" fill="#333" opacity="1"/><path d="M24 44 Q30 56 36 46 Q40 40 42 52 Q48 58 58 50" stroke="#777" stroke-width="6" fill="none" stroke-linecap="round" stroke-linejoin="round" opacity="0.8"/></g></g><g transform="translate(360,37)"><g clip-path="url(#tc)"><rect width="58" height="58" fill="url(#tb)"/><path d="M58 0 L34 24" stroke="#c06a8a" stroke-width="10" stroke-linecap="butt" opacity="1"/><path d="M34 24 L26 32" stroke="#6a5a50" stroke-width="7" stroke-linecap="butt" opacity="1"/><path d="M20 46 Q34 48 38 40 Q34 54 50 48 L58 40" stroke="#333" stroke-width="3" fill="none" stroke-linecap="round" stroke-linejoin="round" opacity="1"/></g></g><g transform="translate(0,97)"><g clip-path="url(#tc)"><rect width="58" height="58" fill="url(#tb)"/><path d="M6 12 A5 5 0 0 1 15 9 M17 12 A5 5 0 0 1 8 15" stroke="#777" stroke-width="2" fill="none" stroke-linecap="round" stroke-linejoin="round" opacity="1"/><path d="M58 0 L36 22" stroke="#6aa8e0" stroke-width="15" stroke-linecap="butt" opacity="1"/><path d="M36 22 L26 32" stroke="#555" stroke-width="10" stroke-linecap="butt" opacity="1"/><ellipse cx="23" cy="35" rx="3" ry="3" fill="#5ab0e8" opacity="1"/><ellipse cx="32" cy="50" rx="24" ry="8" fill="#444" opacity="0.75" filter="url(#bl)"/></g></g><g transform="translate(60,97)"><g clip-path="url(#tc)"><rect width="58" height="58" fill="url(#tb)"/><path d="M58 2 L34 26" stroke="#a0a8b0" stroke-width="16" stroke-linecap="butt" opacity="1"/><path d="M52 8 L40 20" stroke="#5a80b0" stroke-width="6" stroke-linecap="butt" opacity="1"/><path d="M34 26 L26 34" stroke="#333" stroke-width="9" stroke-linecap="butt" opacity="1"/><path d="M10 46 Q30 40 58 46 L58 58 L10 58 Z" fill="#999" opacity="0.6"/></g></g><g transform="translate(120,97)"><g clip-path="url(#tc)"><rect width="58" height="58" fill="url(#tb)"/><path d="M58 2 L34 26" stroke="#5a6268" stroke-width="16" stroke-linecap="butt" opacity="1"/><path d="M52 8 L40 20" stroke="#5a80b0" stroke-width="6" stroke-linecap="butt" opacity="1"/><path d="M34 26 L26 34" stroke="#111" stroke-width="10" stroke-linecap="butt" opacity="1"/><path d="M10 46 L24 42 L26 58 L10 58 Z" fill="#111" opacity="1"/><path d="M26 48 Q40 38 58 44 L58 58 L26 58 Z" fill="#555" opacity="0.7"/></g></g><g transform="translate(180,97)"><g clip-path="url(#tc)"><rect width="58" height="58" fill="url(#tb)"/><path d="M58 0 L46 12" stroke="#7a9a30" stroke-width="5" stroke-linecap="butt" opacity="1"/><path d="M46 12 L38 20" stroke="#bbb" stroke-width="4" stroke-linecap="butt" opacity="1"/><path d="M38 20 L26 34" stroke="#3a2a20" stroke-width="4" stroke-linecap="round" opacity="1"/><path d="M20 38 Q16 50 30 50 Q40 44 46 52 Q52 58 58 50" stroke="#111" stroke-width="2.5" fill="none" stroke-linecap="round" stroke-linejoin="round" opacity="1"/></g></g><g transform="translate(240,97)"><g clip-path="url(#tc)"><rect width="58" height="58" fill="url(#tb)"/><path d="M6 12 L12 6 L15 9 L9 15 L5 16 Z" stroke="#444" stroke-width="1.4" fill="none" stroke-linecap="round" stroke-linejoin="round" opacity="1"/><path d="M58 0 L44 14" stroke="#8a8a70" stroke-width="6" stroke-linecap="butt" opacity="1"/><path d="M44 14 L34 24" stroke="#ccc" stroke-width="8" stroke-linecap="butt" opacity="1"/><path d="M34 24 L26 34" stroke="#aaa" stroke-width="10" stroke-linecap="butt" opacity="1"/><path d="M14 38 Q10 54 22 54" stroke="#111" stroke-width="4" fill="none" stroke-linecap="round" stroke-linejoin="round" opacity="1"/><path d="M26 48 Q40 40 58 50" stroke="#888" stroke-width="5" fill="none" stroke-linecap="round" stroke-linejoin="round" opacity="1"/></g></g><g transform="translate(300,97)"><g clip-path="url(#tc)"><rect width="58" height="58" fill="url(#tbs)"/><path d="M6 12 L12 6 L15 9 L9 15 L5 16 Z" stroke="#444" stroke-width="1.4" fill="none" stroke-linecap="round" stroke-linejoin="round" opacity="1"/><path d="M58 0 L40 18" stroke="#b0d8f4" stroke-width="13" stroke-linecap="butt" opacity="1"/><path d="M50 8 L42 16" stroke="#6a9ac8" stroke-width="13" stroke-linecap="butt" opacity="1"/><ellipse cx="33" cy="26" rx="10" ry="7" fill="#1a2e58" transform="rotate(-45 33 26)"/><path d="M6 38 Q14 58 58 46" stroke="#1a2a50" stroke-width="6" fill="none" stroke-linecap="round" stroke-linejoin="round" opacity="1"/><path d="M10 46 Q26 60 56 54" stroke="#2a4070" stroke-width="3" fill="none" stroke-linecap="round" stroke-linejoin="round" opacity="1"/><path d="M14 36 Q20 50 50 44" stroke="#3a5a90" stroke-width="2" fill="none" stroke-linecap="round" stroke-linejoin="round" opacity="1"/><rect x=".5" y=".5" width="57" height="57" fill="none" stroke="#4a78a8" stroke-width="2"/></g></g><g transform="translate(360,97)"><g clip-path="url(#tc)"><rect width="58" height="58" fill="url(#tb)"/><path d="M58 0 L48 10" stroke="#7a9a30" stroke-width="5" stroke-linecap="butt" opacity="1"/><path d="M48 10 L40 18" stroke="#aaa" stroke-width="7" stroke-linecap="butt" opacity="1"/><path d="M40 18 L24 30" stroke="#4a3a30" stroke-width="8" stroke-linecap="round" opacity="1"/><ellipse cx="34" cy="48" rx="24" ry="8" fill="#666" opacity="0.7" filter="url(#bl)"/></g></g><g transform="translate(0,157)"><g clip-path="url(#tc)"><rect width="58" height="58" fill="url(#tb)"/><path d="M6 12 L12 6 L15 9 L9 15 L5 16 Z" stroke="#444" stroke-width="1.4" fill="none" stroke-linecap="round" stroke-linejoin="round" opacity="1"/><path d="M58 0 L40 18" stroke="#d8d0e0" stroke-width="15" stroke-linecap="butt" opacity="1"/><ellipse cx="34" cy="24" rx="10" ry="8" fill="#b0a868" transform="rotate(-45 34 24)"/><path d="M10 44 Q30 42 58 54" stroke="#222" stroke-width="5" fill="none" stroke-linecap="round" stroke-linejoin="round" opacity="1"/><path d="M8 44 L14 38 L18 44 L24 40 L28 46 L10 50 Z" fill="#222" opacity="1"/></g></g><g transform="translate(60,157)"><g clip-path="url(#tc)"><rect width="58" height="58" fill="url(#tb)"/><ellipse cx="40" cy="14" rx="14" ry="10" fill="#222" opacity="1"/><path d="M10 36 L24 34 L26 48 L10 50 Z" fill="#999" opacity="0.8"/><path d="M24 46 L58 48" stroke="#222" stroke-width="8" stroke-linecap="round" opacity="1"/></g></g><g transform="translate(120,157)"><g clip-path="url(#tc)"><rect width="58" height="58" fill="url(#tb)"/><path d="M58 0 L40 18" stroke="#555" stroke-width="3" stroke-linecap="butt" opacity="1"/><path d="M42 14 L22 30" stroke="#eee" stroke-width="11" stroke-linecap="butt" opacity="1"/><path d="M50 56 Q10 56 14 44 Q18 32 34 32" stroke="#777" stroke-width="10" fill="none" stroke-linecap="round" stroke-linejoin="round" opacity="0.8"/></g></g><g transform="translate(180,157)"><g clip-path="url(#tc)"><rect width="58" height="58" fill="url(#tb)"/><path d="M58 0 L42 16" stroke="#d0c8d8" stroke-width="15" stroke-linecap="butt" opacity="1"/><path d="M42 16 L30 28" stroke="#c8b880" stroke-width="15" stroke-linecap="butt" opacity="1"/><path d="M14 40 Q20 58 58 54" stroke="#222" stroke-width="9" fill="none" stroke-linecap="round" stroke-linejoin="round" opacity="0.85"/></g></g><g transform="translate(240,157)"><g clip-path="url(#tc)"><rect width="58" height="58" fill="url(#tb)"/><path d="M58 0 L40 18" stroke="#a07a40" stroke-width="6" stroke-linecap="butt" opacity="1"/><path d="M40 18 L26 30" stroke="#c8b860" stroke-width="12" stroke-linecap="butt" opacity="1"/><path d="M14 46 Q30 38 58 48" stroke="#222" stroke-width="8" fill="none" stroke-linecap="round" stroke-linejoin="round" opacity="0.85"/></g></g><g transform="translate(300,157)"><g clip-path="url(#tc)"><rect width="58" height="58" fill="url(#tb)"/><path d="M58 0 L46 12" stroke="#222" stroke-width="5" stroke-linecap="butt" opacity="1"/><path d="M46 12 L36 22" stroke="#ccc" stroke-width="6" stroke-linecap="butt" opacity="1"/><path d="M36 22 L28 30" stroke="#d0c890" stroke-width="8" stroke-linecap="round" opacity="1"/><path d="M12 38 Q30 48 58 42 M14 44 Q30 52 56 48 M16 50 Q30 56 54 54" stroke="#222" stroke-width="1.8" fill="none" stroke-linecap="round" stroke-linejoin="round" opacity="1"/></g></g><g transform="translate(360,157)"><g clip-path="url(#tc)"><rect width="58" height="58" fill="url(#tb)"/><path d="M58 0 L40 18" stroke="#d8c8d0" stroke-width="15" stroke-linecap="butt" opacity="1"/><path d="M40 18 L30 28" stroke="#b8b070" stroke-width="12" stroke-linecap="butt" opacity="1"/><path d="M10 44 Q28 30 58 40 L58 58 L14 58 Z" fill="#333" opacity="0.8"/></g></g><g transform="translate(0,217)"><g clip-path="url(#tc)"><rect width="58" height="58" fill="url(#tb)"/><path d="M58 0 L26 30" stroke="#7aaa40" stroke-width="11" stroke-linecap="butt" opacity="1"/><path d="M8 44 Q20 36 32 42 L30 58 L12 58 Z" fill="#777" opacity="0.55"/><path d="M30 44 L58 38 L58 58 L34 58 Z" fill="#111" opacity="1"/></g></g><g transform="translate(60,217)"><g clip-path="url(#tc)"><rect width="58" height="58" fill="url(#tb)"/><path d="M58 0 L26 32" stroke="#d89a50" stroke-width="12" stroke-linecap="butt" opacity="1"/><path d="M14 48 Q30 56 58 36" stroke="#222" stroke-width="10" fill="none" stroke-linecap="round" stroke-linejoin="round" opacity="0.8"/></g></g><g transform="translate(120,217)"><g clip-path="url(#tc)"><rect width="58" height="58" fill="url(#tb)"/><path d="M58 0 L40 18" stroke="#8a8a60" stroke-width="11" stroke-linecap="butt" opacity="1"/><path d="M40 18 L28 30" stroke="#c8c860" stroke-width="11" stroke-linecap="round" opacity="1"/><path d="M20 48 Q36 56 58 44" stroke="#222" stroke-width="8" fill="none" stroke-linecap="round" stroke-linejoin="round" opacity="0.85"/></g></g><g transform="translate(180,217)"><g clip-path="url(#tc)"><rect width="58" height="58" fill="url(#tb)"/><path d="M58 0 L30 28" stroke="#1a1a1a" stroke-width="11" stroke-linecap="butt" opacity="1"/><path d="M25 23 L35 33 L20 40 Z" fill="#e8c8c0" opacity="1"/><ellipse cx="21" cy="38" rx="3" ry="3" fill="#111" opacity="1"/><path d="M16 48 L34 44 L38 40 L32 50 L50 44 L44 52 L58 50" stroke="#111" stroke-width="2.5" fill="none" stroke-linecap="round" stroke-linejoin="round" opacity="1"/></g></g><g transform="translate(240,217)"><g clip-path="url(#tc)"><rect width="58" height="58" fill="url(#tb)"/><path d="M58 0 L32 26" stroke="#8a5a40" stroke-width="11" stroke-linecap="butt" opacity="1"/><path d="M27 21 L37 31 L22 38 Z" fill="#e0c0b0" opacity="1"/><ellipse cx="23" cy="37" rx="2.5" ry="2.5" fill="#333" opacity="1"/><path d="M18 42 Q14 58 30 52 L58 48" stroke="#666" stroke-width="1.2" fill="none" stroke-linecap="round" stroke-linejoin="round" opacity="1"/></g></g><g transform="translate(300,217)"><g clip-path="url(#tc)"><rect width="58" height="58" fill="url(#tb)"/><path d="M58 0 L34 24" stroke="#a8a8a8" stroke-width="10" stroke-linecap="butt" opacity="1"/><path d="M29 19 L39 29 L24 36 Z" fill="#e0d8c0" opacity="1"/><ellipse cx="25" cy="35" rx="2.5" ry="2.5" fill="#222" opacity="1"/><path d="M18 52 Q30 48 58 44" stroke="#999" stroke-width="1" fill="none" stroke-linecap="round" stroke-linejoin="round" opacity="1"/></g></g><g transform="translate(360,217)"><g clip-path="url(#tc)"><rect width="58" height="58" fill="url(#tb)"/><path d="M14 8 Q10 14 11 16 A3.5 3.5 0 0 0 18 16 Q18 13 14 8 Z" fill="#7ab8f0" opacity="1"/><path d="M58 0 L46 12" stroke="#555" stroke-width="5" stroke-linecap="butt" opacity="1"/><path d="M46 12 L38 20" stroke="#ccc" stroke-width="5" stroke-linecap="butt" opacity="1"/><path d="M38 20 L28 30" stroke="#a070e0" stroke-width="10" stroke-linecap="round" opacity="1"/><path d="M14 40 Q30 36 50 46 L58 54 L20 56 Z" fill="#9a70e0" opacity="0.8"/></g></g><g transform="translate(0,277)"><g clip-path="url(#tc)"><rect width="58" height="58" fill="url(#tb)"/><path d="M14 8 Q10 14 11 16 A3.5 3.5 0 0 0 18 16 Q18 13 14 8 Z" fill="#7ab8f0" opacity="1"/><path d="M58 0 L34 24" stroke="#7a5030" stroke-width="6" stroke-linecap="butt" opacity="1"/><path d="M34 24 L26 30" stroke="#8a60c0" stroke-width="8" stroke-linecap="butt" opacity="1"/></g></g><g transform="translate(60,277)"><g clip-path="url(#tc)"><rect width="58" height="58" fill="url(#tb)"/><path d="M14 8 Q10 14 11 16 A3.5 3.5 0 0 0 18 16 Q18 13 14 8 Z" fill="#7ab8f0" opacity="1"/><path d="M58 0 L32 26" stroke="#8a60c0" stroke-width="11" stroke-linecap="butt" opacity="1"/><path d="M50 8 L44 14" stroke="#eee" stroke-width="8" stroke-linecap="butt" opacity="1"/></g></g><g transform="translate(120,277)"><g clip-path="url(#tc)"><rect width="58" height="58" fill="url(#tb)"/><path d="M6 12 A5 5 0 0 1 15 9 M17 12 A5 5 0 0 1 8 15" stroke="#777" stroke-width="2" fill="none" stroke-linecap="round" stroke-linejoin="round" opacity="1"/><path d="M58 0 L48 10" stroke="#8a6a40" stroke-width="4" stroke-linecap="butt" opacity="1"/><path d="M44 16 L30 28" stroke="#eee" stroke-width="9" stroke-linecap="butt" opacity="1"/></g></g><g transform="translate(180,277)"><g clip-path="url(#tc)"><rect width="58" height="58" fill="url(#tb)"/><path d="M14 8 Q10 14 11 16 A3.5 3.5 0 0 0 18 16 Q18 13 14 8 Z" fill="#7ab8f0" opacity="1"/><path d="M58 0 L48 10" stroke="#4a80b0" stroke-width="4" stroke-linecap="butt" opacity="1"/><path d="M44 16 L30 28" stroke="#eee" stroke-width="9" stroke-linecap="butt" opacity="1"/></g></g><g transform="translate(240,277)"><g clip-path="url(#tc)"><rect width="58" height="58" fill="url(#tb)"/><path d="M14 8 Q10 14 11 16 A3.5 3.5 0 0 0 18 16 Q18 13 14 8 Z" fill="#7ab8f0" opacity="1"/><path d="M58 0 L30 28" stroke="#8a60c0" stroke-width="9" stroke-linecap="butt" opacity="1"/><path d="M40 18 L34 24" stroke="#eee" stroke-width="9" stroke-linecap="butt" opacity="1"/></g></g><g transform="translate(300,277)"><g clip-path="url(#tc)"><rect width="58" height="58" fill="url(#tb)"/><path d="M14 8 Q10 14 11 16 A3.5 3.5 0 0 0 18 16 Q18 13 14 8 Z" fill="#7ab8f0" opacity="1"/><path d="M58 0 L32 26" stroke="#8a60c0" stroke-width="7" stroke-linecap="butt" opacity="1"/><path d="M40 18 L34 24" stroke="#ccc" stroke-width="6" stroke-linecap="butt" opacity="1"/></g></g><g transform="translate(360,277)"><g clip-path="url(#tc)"><rect width="58" height="58" fill="url(#tb)"/><path d="M14 8 Q10 14 11 16 A3.5 3.5 0 0 0 18 16 Q18 13 14 8 Z" fill="#7ab8f0" opacity="1"/><path d="M58 0 L32 26" stroke="#3a80c0" stroke-width="7" stroke-linecap="butt" opacity="1"/><path d="M38 20 L32 26" stroke="#b8a040" stroke-width="7" stroke-linecap="butt" opacity="1"/></g></g></svg></div>
<div class="a" style="left:1903px;top:684px;width:13px;height:302px;background:#434343"></div>
<div class="a" style="left:1903px;top:686px;width:13px;height:16px;border:1px solid #3a3a3a;background:#4a4a4a"></div>
<svg style="left:1903px;top:686px" width="13" height="16"><path d="M2.5 10 L6.5 5.5 L10.5 10 Z" fill="#aaa"/></svg>
<div class="a" style="left:1904px;top:730px;width:11px;height:64px;background:#4c4c4c;border:1px solid #3c3c3c"></div>
<div class="a" style="left:1903px;top:968px;width:13px;height:16px;border:1px solid #3a3a3a;background:#4a4a4a"></div>
<svg style="left:1903px;top:968px" width="13" height="16"><path d="M2.5 6 L6.5 10.5 L10.5 6 Z" fill="#aaa"/></svg>
<div class="fld" style="left:1466px;top:988px;width:348px;height:24px;background:#3d3d3d"></div>
<div class="t" style="left:1469.6px;top:993.7px;color:#8a8a8a;transform:scaleX(0.956);transform-origin:0 0">Search</div>
<div class="a" style="left:1822px;top:991px;width:16px;height:17px;background:#444"></div>
<div class="t" style="left:1824px;top:993px;font-size:14px">✓</div>
<div class="t" style="left:1841.3px;top:993.7px;transform:scaleX(1.038);transform-origin:0 0">Filter in Tag</div>

<!-- ============ STATUS ============ -->
<div class="a" style="left:0;top:1015px;width:1920px;height:37px;background:#4a4a4a"></div>
<svg style="left:6px;top:1024px" width="16" height="16"><rect x="1.5" y="1.5" width="13" height="13" fill="none" stroke="#aaa" stroke-width="1"/><circle cx="8" cy="8" r="4" fill="none" stroke="#aaa" stroke-dasharray="1.5 1.5"/></svg>
<div class="t" style="left:36.5px;top:1027.1px;font-size:14px;transform:scaleX(1.113);transform-origin:0 0">f) Bristles-3 Large Smooth</div>
<div class="t" style="left:462.5px;top:1027.1px;font-size:14px;transform:scaleX(1.105);transform-origin:0 0">RGB/Alpha (8-bit integer/channel)&nbsp; sRGB-elle-V2-srgbtrc.icc</div>
<div class="a" style="left:1382px;top:1018px;width:134px;height:32px;background:#434343;border:1px solid #3c3c3c"></div>
<div class="a" style="left:1385px;top:1021px;width:16px;height:26px;background:#5a7b9c"></div>
<div class="t" style="left:1386.6px;top:1027.3px;font-size:14px;transform:scaleX(1.064);transform-origin:0 0">3,840 x 2,160 (0 B)</div>
<svg style="left:1522px;top:1015px" width="36" height="34"><circle cx="18" cy="17" r="14" fill="#383838"/><path d="M10 17 H26" stroke="#ddd" stroke-width="1.2"/><circle cx="10" cy="17" r="1.5" fill="#ddd"/><circle cx="26" cy="17" r="1.5" fill="#ddd"/></svg>
<div class="t" style="left:1589.0px;top:1027.3px;font-size:14px;transform:scaleX(1.053);transform-origin:0 0">0.00°</div>
<div class="t" style="left:1727.3px;top:1027.3px;font-size:14px;transform:scaleX(1.033);transform-origin:0 0">25.0%</div>
<div class="a" style="left:1788px;top:1031px;width:80px;height:3px;background:#3a3a3a;border-radius:1px"></div>
<div class="a" style="left:1788px;top:1031px;width:12px;height:3px;background:#999"></div>
<div class="a" style="left:1796px;top:1026px;width:11px;height:13px;background:#5c5c5c;border:1px solid #333;border-radius:2px"></div>
<div class="a" style="left:1871px;top:1021px;width:20px;height:22px;border:1px solid #333;border-radius:2px;background:#4a4a4a"></div>
<svg style="left:1875px;top:1025px" width="14" height="14"><rect x="1" y="1" width="11" height="13" fill="none" stroke="#ddd" stroke-width="1.5"/><rect x="4.5" y="5.5" width="4" height="4" fill="#ddd"/></svg>


<!-- ============ GRADIENT POPUP ============ -->
<div class="a" style="left:196px;top:61px;width:301px;height:421px;background:#4a4a4a;border-left:1px solid #c8c8c8;border-top:1px solid #c8c8c8;border-bottom:1px solid #c8c8c8"></div>
<div class="a" style="left:208px;top:105px;width:278px;height:366px;border:1px solid #3e3e3e;border-radius:2px"></div>
<div class="a" style="left:209px;top:73px;width:93px;height:33px;border:1px solid #3e3e3e;border-bottom:0;border-radius:3px 3px 0 0;background:#4a4a4a"></div>
<div class="t" style="left:221.0px;top:83.9px;font-size:14px;transform:scaleX(1.120);transform-origin:0 0">Gradients</div>
<div class="t" style="left:220.0px;top:121.9px;font-size:14px;transform:scaleX(1.129);transform-origin:0 0">1. Foreground to Transparent</div>
<div class="combo" style="left:220px;top:146px;width:139px;height:28px"></div>
<div class="t" style="left:224.0px;top:153.7px;font-size:14px;transform:scaleX(1.067);transform-origin:0 0">All</div>
<div class="arr" style="left:341px;top:157px;border-left-width:5px;border-right-width:5px;border-top-width:6px;border-top-color:#999"></div>
<div class="btn" style="left:361px;top:146px;width:60px;height:28px"></div>
<svg style="left:361px;top:146px" width="120" height="28">
<path d="M6.5 5.5 H15.5 V22 L11 18 L6.5 22 Z" fill="none" stroke="#ddd" stroke-width="1.6"/>
<path d="M52 21 L58 21 L55 24 Z" fill="#999"/>
<path d="M68 8 H85 M68 14 H85 M68 20 H85" stroke="#ddd" stroke-width="2"/>
<rect x="92.5" y="4.5" width="17" height="17" fill="none" stroke="#ddd" stroke-width="1.3"/><path d="M101 7 V12" stroke="#ddd" stroke-width="1" stroke-dasharray="1 1"/>
</svg>
<div class="t" style="left:383.0px;top:153.7px;font-size:14px;transform:scaleX(1.085);transform-origin:0 0">Tag</div>
<div class="a" style="left:220px;top:176px;width:240px;height:193px;background:#3c3c3c"></div>
<div class="a" style="left:460px;top:176px;width:14px;height:193px;background:#434343"></div>
<div class="a" style="left:460px;top:176px;width:14px;height:16px;border:1px solid #3a3a3a;background:#4a4a4a"></div>
<svg style="left:460px;top:176px" width="14" height="16"><path d="M3 10 L7 5.5 L11 10 Z" fill="#aaa"/></svg>
<div class="a" style="left:460px;top:192px;width:14px;height:52px;border:1px solid #3a3a3a;background:#4b4b4b"></div>
<div class="a" style="left:460px;top:352px;width:14px;height:16px;border:1px solid #3a3a3a;background:#4a4a4a"></div>
<svg style="left:460px;top:352px" width="14" height="16"><path d="M3 6 L7 10.5 L11 6 Z" fill="#aaa"/></svg>
<svg style="left:222px;top:178px" width="188" height="188">
<defs>
<pattern id="ck2" width="10" height="10" patternUnits="userSpaceOnUse"><rect width="10" height="10" fill="#7c7c7c"/><rect width="5" height="5" fill="#b4b4b4"/><rect x="5" y="5" width="5" height="5" fill="#b4b4b4"/></pattern>
<pattern id="ck3" width="10" height="10" patternUnits="userSpaceOnUse"><rect width="10" height="10" fill="#8c8c8c"/><rect width="5" height="5" fill="#c8c8c8"/><rect x="5" y="5" width="5" height="5" fill="#c8c8c8"/></pattern>
<linearGradient id="t1" x1="0" x2="1"><stop offset="0" stop-color="#1a1a1a"/><stop offset=".3" stop-color="#9a9a9a"/><stop offset=".6" stop-color="#cfcfcf"/><stop offset="1" stop-color="#fff"/></linearGradient>
<linearGradient id="t2" x1="0" x2="1"><stop offset="0" stop-color="#000" stop-opacity="1"/><stop offset="1" stop-color="#000" stop-opacity="0"/></linearGradient>
<linearGradient id="t3" x1="0" x2="1"><stop offset="0" stop-color="#fafafa"/><stop offset=".5" stop-color="#bcbcc2"/><stop offset="1" stop-color="#727284"/></linearGradient>
<linearGradient id="t4" x1="0" x2="1"><stop offset="0" stop-color="#383838"/><stop offset=".25" stop-color="#a8a8a8"/><stop offset=".5" stop-color="#f6f6f6"/><stop offset="1" stop-color="#fff"/></linearGradient>
<linearGradient id="t5" x1="0" x2="1"><stop offset="0" stop-color="#000" stop-opacity="0"/><stop offset=".48" stop-color="#000" stop-opacity="1"/><stop offset="1" stop-color="#000"/></linearGradient>
<linearGradient id="t6" x1="0" x2="1"><stop offset="0" stop-color="#fff" stop-opacity="0"/><stop offset=".45" stop-color="#fff" stop-opacity="1"/><stop offset="1" stop-color="#fafafa"/></linearGradient>
<linearGradient id="t7" x1="0" x2="1"><stop offset="0" stop-color="#000"/><stop offset=".27" stop-color="#000"/><stop offset=".28" stop-color="#3ad4f0"/><stop offset=".55" stop-color="#1a5a8a"/><stop offset=".57" stop-color="#e8f4f8"/><stop offset=".85" stop-color="#f4e8ea"/><stop offset="1" stop-color="#f06070"/></linearGradient>
<linearGradient id="t8" x1="0" x2="1"><stop offset="0" stop-color="#fbf4f4"/><stop offset=".12" stop-color="#f07070" stop-opacity=".95"/><stop offset=".35" stop-color="#e85454" stop-opacity=".85"/><stop offset=".55" stop-color="#e05858" stop-opacity=".45"/><stop offset="1" stop-color="#e06060" stop-opacity=".12"/></linearGradient>
</defs>
<rect x="0" y="0" width="92" height="44" fill="url(#t1)"/>
<rect x="96" y="0" width="92" height="44" fill="url(#ck2)"/><rect x="96" y="0" width="92" height="44" fill="url(#t2)"/>
<rect x="95.5" y="-0.5" width="93" height="45" fill="none" stroke="#5a7b9c" stroke-width="1"/>
<rect x="0" y="48" width="92" height="44" fill="url(#t3)"/>
<rect x="96" y="48" width="92" height="44" fill="url(#t4)"/>
<rect x="0" y="96" width="92" height="44" fill="url(#ck2)"/><rect x="0" y="96" width="92" height="44" fill="url(#t5)"/>
<rect x="96" y="96" width="92" height="44" fill="url(#ck3)"/><rect x="96" y="96" width="92" height="44" fill="url(#t6)"/>
<rect x="0" y="144" width="92" height="44" fill="url(#t7)"/>
<rect x="96" y="144" width="92" height="44" fill="url(#ck2)"/><rect x="96" y="144" width="92" height="44" fill="url(#t8)"/>
</svg>
<svg style="left:446px;top:320px" width="16" height="24"><path d="M2.5 1.5 V17 L6 13.5 L9 20 L11.5 19 L8.5 12.5 H13.5 Z" fill="#3c3c3c" stroke="#e6e6e6" stroke-width="1.2"/></svg>
<div class="fld" style="left:219px;top:370px;width:141px;height:28px;background:#414141"></div>
<div class="t" style="left:222.6px;top:378.0px;font-size:14px;color:#8a8a8a;transform:scaleX(1.035);transform-origin:0 0">Search</div>
<div class="a" style="left:367px;top:375px;width:13px;height:17px;background:#444"></div>
<svg style="left:368px;top:377px" width="13" height="14"><path d="M1 7 L5 12 L11 1" stroke="#ddd" stroke-width="1.6" fill="none"/></svg>
<div class="t" style="left:387.8px;top:378.1px;font-size:14px;transform:scaleX(1.107);transform-origin:0 0">Filter in Tag</div>
<svg style="left:224px;top:402px" width="50" height="18">
<path d="M10 1.5 H1.5 V16.5 H10 M1.5 1.5 V16.5" fill="none" stroke="#ddd" stroke-width="1.5"/><path d="M14 9 H6 M9 6 L6 9 L9 12" fill="none" stroke="#ddd" stroke-width="1.6"/>
<path d="M27 4 H41 M31 4 V2 H37 V4 M28.5 6 H39.5 L38.5 17 H29.5 Z" fill="#ddd" stroke="#ddd" stroke-width="1"/>
</svg>
<div class="btn" style="left:220px;top:431px;width:77px;height:27px"></div>
<div class="btn" style="left:299px;top:431px;width:12px;height:27px"></div>
<svg style="left:220px;top:431px" width="100" height="27"><path d="M10 5 V21 M2 13 H18" stroke="#eee" stroke-width="2"/><path d="M81 12 L87 12 L84 16 Z" fill="#999"/></svg>
<div class="t" style="left:242.3px;top:439.1px;font-size:14px;transform:scaleX(1.058);transform-origin:0 0">Add...</div>
<div class="btn" style="left:318px;top:431px;width:77px;height:27px"></div>
<div class="t" style="left:338.5px;top:439.1px;font-size:14px;transform:scaleX(1.020);transform-origin:0 0">Edit...</div>

<!-- ============ DIALOG ============ -->
<div class="a" style="left:774px;top:354px;width:474px;height:252px;box-shadow:0 9px 30px 4px rgba(0,0,0,.62)"></div>
<div class="a" style="left:774px;top:354px;width:474px;height:252px;background:#4a4a4a"></div>
<div class="a" style="left:774px;top:354px;width:474px;height:29px;background:#e4e4e4;border-top:1px solid #f6f6f6"></div>
<svg style="left:779px;top:359px" width="60" height="18"><defs><linearGradient id="kba" x1="1" y1="0" x2="0" y2="1"><stop offset="0" stop-color="#d83ae0"/><stop offset=".45" stop-color="#f05ab0"/><stop offset=".6" stop-color="#9a8ae8"/><stop offset="1" stop-color="#30d8f0"/></linearGradient>
<radialGradient id="kbb" cx=".85" cy=".75" r=".35"><stop offset="0" stop-color="#f8d030"/><stop offset="1" stop-color="#f8d030" stop-opacity="0"/></radialGradient></defs>
<circle cx="9" cy="9" r="8" fill="url(#kba)"/><circle cx="9" cy="9" r="8" fill="url(#kbb)"/>
<path d="M1.5 1.5 L11.5 11.5" stroke="#1a1a2a" stroke-width="2.6" stroke-linecap="round"/><circle cx="12.5" cy="12.5" r="2.2" fill="#1a1a2a"/>
<path d="M28 6 L33 2 L38 6 M28 11 L33 7 L38 11" stroke="#333" stroke-width="1.5" fill="none"/>
</svg>
<div class="t" style="left:923.0px;top:361.5px;font-size:13px;color:#2a2a2a;transform:scaleX(1.034);transform-origin:0 0">Custom Stop Gradient – Krita</div>
<svg style="left:1176px;top:360px" width="66" height="16"><g stroke="#333" stroke-width="1.5" fill="none"><path d="M4 5 L10 11 L16 5"/><path d="M28 11 L34 5 L40 11"/><path d="M53 3 L63 13 M63 3 L53 13"/></g></svg>
<div class="t" style="left:786.7px;top:403.9px;font-size:14px;transform:scaleX(1.080);transform-origin:0 0">Name:</div>
<div class="fld" style="left:838px;top:395px;width:398px;height:30px;background:#383838"></div>
<div class="t" style="left:841.7px;top:403.9px;font-size:14px;color:#dedede;transform:scaleX(1.017);transform-origin:0 0">Seaside-01</div>
<svg style="left:786px;top:436px" width="460" height="24">
<g stroke="#ddd" stroke-width="2.1" fill="none"><path d="M16.5 2.5 L9.5 11 L16.5 19.5"/><path d="M35 2.5 L42 11 L35 19.5"/></g>
<path d="M134 5 H148 M138 5 V2.5 H144 V5 M135.5 7.5 H146.5 L145.5 18.5 H136.5 Z" fill="#ddd" stroke="#ddd" stroke-width="1"/>
<path d="M337 5 V22 M334 6 L327 20 H334 Z M340 6 L347 20 H340 Z" stroke="#ddd" stroke-width="1.4" fill="none"/>
<defs><linearGradient id="bw" x1="0" x2="1"><stop offset="0" stop-color="#333"/><stop offset="1" stop-color="#eee"/></linearGradient>
<linearGradient id="rb" x1="0" x2="1"><stop offset="0" stop-color="#f0e020"/><stop offset=".3" stop-color="#30e060"/><stop offset=".6" stop-color="#3040e0"/><stop offset="1" stop-color="#e030e0"/></linearGradient></defs>
<rect x="365" y="2" width="17" height="6" fill="url(#bw)" stroke="#ddd" stroke-width="1"/><path d="M366 15 H380 M376 11 L380 15 L376 19" stroke="#ddd" stroke-width="1.8" fill="none"/>
<rect x="392" y="2" width="17" height="6" fill="url(#rb)" stroke="#ddd" stroke-width="1"/><path d="M392 15 H406 M402 11 L406 15 L402 19" stroke="#ddd" stroke-width="1.8" fill="none"/>
<path d="M428.5 7.5 H432.5 V15.5 H428.5 Z M440.5 7.5 H444.5 V15.5 H440.5 Z M433 11.5 H440 M436 9.5 L434 11.5 L436 13.5" stroke="#ddd" stroke-width="1.3" fill="none"/>
</svg>
<div class="t" style="left:848.3px;top:441.9px;font-size:14px;font-weight:bold;transform:scaleX(1.056);transform-origin:0 0">Stop #1</div>
<svg style="left:790px;top:468px" width="444" height="52">
<defs>
<pattern id="ck4" width="10" height="10" patternUnits="userSpaceOnUse"><rect width="10" height="10" fill="#d8d0a0"/><rect width="5" height="5" fill="#eee0a8"/><rect x="5" y="5" width="5" height="5" fill="#eee0a8"/></pattern>
<linearGradient id="sg" x1="0" x2="1">
<stop offset="0" stop-color="#e8c860" stop-opacity="0"/>
<stop offset=".1" stop-color="#edc062" stop-opacity="1"/>
<stop offset=".25" stop-color="#e0853e"/>
<stop offset=".75" stop-color="#e0853e"/>
<stop offset=".88" stop-color="#cf8ba0"/>
<stop offset="1" stop-color="#a68ee0"/>
</linearGradient>
</defs>
<rect x="4" y="2" width="434" height="29" fill="#2a2020"/>
<rect x="4" y="3" width="434" height="27" fill="url(#ck4)"/>
<rect x="4" y="3" width="434" height="27" fill="url(#sg)"/>
<path d="M4 32.5 L8.79 40.40 A5.6 5.6 0 1 1 -0.79 40.40 Z" fill="#858566" stroke="#2a2418" stroke-width=".8"/>
<path d="M47.5 32.5 L52.29 40.40 A5.6 5.6 0 1 1 42.71 40.40 Z" fill="#f2c25c" stroke="#2a2418" stroke-width=".8"/>
<path d="M112 32.5 L116.79 40.40 A5.6 5.6 0 1 1 107.21 40.40 Z" fill="#e68c40" stroke="#2a2418" stroke-width=".8"/>
<path d="M329 32.5 L333.79 40.40 A5.6 5.6 0 1 1 324.21 40.40 Z" fill="#e68c40" stroke="#2a2418" stroke-width=".8"/>
<path d="M438 32.5 L442.79 40.40 A5.6 5.6 0 1 1 433.21 40.40 Z" fill="#a890e6" stroke="#2a2418" stroke-width=".8"/>
</svg>
<svg style="left:788px;top:533px" width="80" height="26">
<g stroke="#ddd" stroke-width="1.2" fill="none"><rect x="2.5" y="3.5" width="10" height="10"/><rect x="29.5" y="3.5" width="10" height="10"/></g>
<rect x="8" y="9" width="11" height="11" fill="#ddd"/><rect x="33" y="9" width="11" height="11" fill="#ddd" />
<rect x="51.5" y="0.5" width="24" height="25" rx="2" fill="#444" stroke="#3a3a3a"/>
<g stroke="#ddd" stroke-width="1.6" fill="none"><circle cx="63.5" cy="13" r="8"/><path d="M63.5 5 V21 M56.5 9 L70.5 17 M56.5 17 L70.5 9"/></g>
</svg>
<div class="a" style="left:870px;top:533px;width:47px;height:23px;border:1px solid #3a3a3a;border-radius:2px;background:#474747"></div>
<div class="a" style="left:874px;top:537px;width:39px;height:14px;background:#f0dc78"></div>
<div class="a" style="left:923px;top:531px;width:151px;height:28px;background:#383838;border-radius:2px"></div>
<div class="a" style="left:923px;top:531px;width:68px;height:28px;background:#597b9c;border-radius:2px 0 0 2px"></div>
<div class="t" style="left:935.3px;top:538.9px;font-size:14px;color:#e4e4e4;transform:scaleX(1.079);transform-origin:0 0">Opacity: 50.20%</div>
<div class="a" style="left:1059px;top:533px;width:14px;height:24px;border:1px solid #444;border-radius:2px"></div>
<svg style="left:1059px;top:533px" width="14" height="24"><path d="M3 9 L7 5 L11 9 Z M3 15 L7 19 L11 15 Z" fill="#999"/></svg>
<div class="a" style="left:1080px;top:531px;width:155px;height:28px;background:#383838;border-radius:2px"></div>
<div class="a" style="left:1220px;top:533px;width:14px;height:24px;border:1px solid #444;border-radius:2px"></div>
<svg style="left:1220px;top:533px" width="14" height="24"><path d="M3 9 L7 5 L11 9 Z" fill="#999"/><path d="M3 15 L7 19 L11 15 Z" fill="#555"/></svg>
<div class="t" style="left:1097.5px;top:538.9px;font-size:14px;transform:scaleX(1.084);transform-origin:0 0">Position: 0.00%</div>
<div class="btn" style="left:1071px;top:567px;width:78px;height:27px;background:linear-gradient(#4c5054,#464a4e);border-color:#3c4650"></div>
<svg style="left:1090px;top:573px" width="16" height="16"><path d="M2 9 L6 13 L13 4" stroke="#333" stroke-width="1.8" fill="none"/></svg>
<div class="t" style="left:1108.7px;top:573.9px;font-size:14px;transform:scaleX(0.969);transform-origin:0 0">OK</div>
<div class="a" style="left:1108px;top:590px;width:10px;height:1px;background:#ccc"></div>
<div class="btn" style="left:1157px;top:567px;width:78px;height:27px"></div>
<svg style="left:1164px;top:573px" width="16" height="16"><circle cx="8" cy="8" r="6" stroke="#333" stroke-width="1.5" fill="none"/><path d="M4 4 L12 12" stroke="#333" stroke-width="1.5"/></svg>
<div class="t" style="left:1182.5px;top:573.9px;font-size:14px;transform:scaleX(1.044);transform-origin:0 0">Cancel</div>
<div class="a" style="left:1182px;top:590px;width:10px;height:1px;background:#ccc"></div>

<!-- ============ CALLOUTS ============ -->
<svg style="left:0;top:0" width="1920" height="1052">
<defs><filter id="cs" x="-50%" y="-50%" width="200%" height="200%"><feDropShadow dx="0" dy="2" stdDeviation="1.6" flood-color="#000" flood-opacity=".55"/></filter></defs>
<g fill="#9dc2f6" filter="url(#cs)">
<circle cx="159.5" cy="93.5" r="19"/><path d="M196.5 61.5 L167 73 L180 92 Z"/>
<circle cx="147" cy="455" r="19"/><path d="M214 446 L156 436 L164 462 Z"/>
<circle cx="737" cy="505" r="19"/><path d="M790 505 L742 491 L750 520 Z"/>
<circle cx="895.5" cy="591.5" r="19"/><path d="M895.5 556 L887 578 L904 578 Z"/>
<circle cx="975" cy="411" r="19"/><path d="M930 410.5 L962 400 L962 422 Z"/>
<circle cx="1116" cy="626" r="19"/><path d="M1116 591.5 L1107 612 L1125 612 Z"/>
</g>
<g fill="#fff" font-family="Liberation Sans" font-weight="bold" font-size="22" text-anchor="middle">
<text x="159" y="101">1</text><text x="147" y="463">2</text><text x="737" y="513">3</text><text x="895.5" y="599">4</text><text x="975" y="419">5</text><text x="1116" y="634">6</text>
</g>
</svg>

</body></html>
